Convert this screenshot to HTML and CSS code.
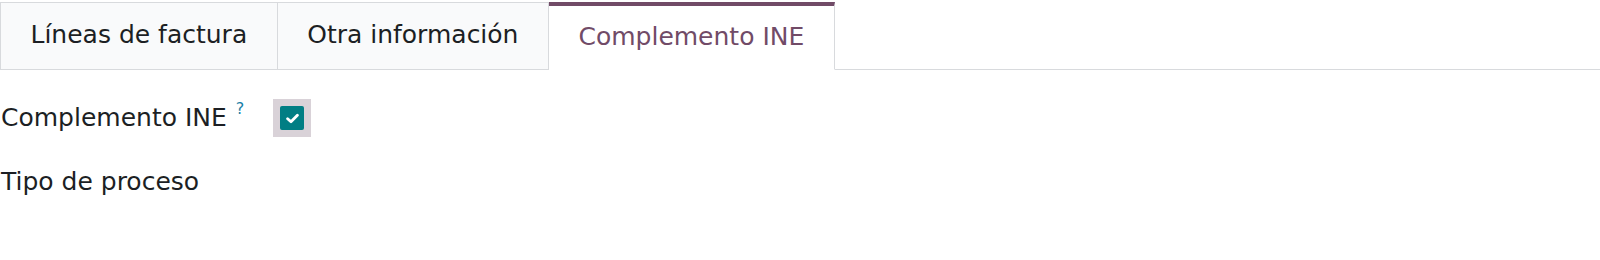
FILE: index.html
```html
<!DOCTYPE html>
<html lang="es">
<head>
  <meta charset="UTF-8" />
  <title>Complemento INE</title>
  <link rel="stylesheet" href="styles.css">
</head>
<body>
  <ul class="tabs">
    <li class="tab">Líneas de factura</li>
    <li class="tab">Otra información</li>
    <li class="tab active">Complemento INE</li>
  </ul>

  <div class="fields">
    <div class="label">Complemento INE<sup class="help">?</sup></div>
    <div class="value">
      <span class="check-wrap">
        <span class="check">
          <svg width="13" height="11" viewBox="0 0 12 10">
            <path d="M1.5 5.2 L4.6 8 L10.5 2" fill="none" stroke="#fff" stroke-width="2.6" stroke-linecap="round" stroke-linejoin="round"/>
          </svg>
        </span>
      </span>
    </div>

    <div class="label">Tipo de proceso</div>
    <div class="value"></div>
  </div>
</body>
</html>
```

FILE: styles.css
```css
body {
  margin: 0;
  background: #fff;
  font-family: "DejaVu Sans", sans-serif;
  font-size: 25px;
  color: #1c1f24;
}
/* Notebook tabs */
.tabs {
  display: flex;
  list-style: none;
  margin: 2px 0 0 0;
  padding: 0;
  border-bottom: 1px solid #d8dadd;
}
.tab {
  padding: 0 29.5px;
  line-height: 64px;
  background: #f9fafb;
  border: 1px solid #d8dadd;
  border-left: none;
  margin-bottom: -1px;
  box-sizing: border-box;
  height: 68px;
}
.tab:first-child { border-left: 1px solid #d8dadd; }
.tab.active {
  background: #fff;
  color: #714b67;
  border-top: 4px solid #714b67;
  border-bottom-color: #fff;
  line-height: 61px;
}
/* Form fields */
.fields {
  display: grid;
  grid-template-columns: 273px 1fr;
  grid-auto-rows: 63px;
  row-gap: 3px;
  align-items: center;
  margin-top: 14px;
}
.label { padding-left: 1px; white-space: nowrap; }
.help {
  color: #1a80a6;
  font-size: 16px;
  margin-left: 9px;
  vertical-align: 12px;
}
.check-wrap {
  display: inline-flex;
  align-items: center;
  justify-content: center;
  width: 38px;
  height: 38px;
  margin-top: 5px;
  background: #d9d2d8;
  vertical-align: middle;
}
.check {
  display: inline-flex;
  align-items: center;
  justify-content: center;
  width: 24px;
  height: 24px;
  background: #017e84;
  border-radius: 2px;
}
```
